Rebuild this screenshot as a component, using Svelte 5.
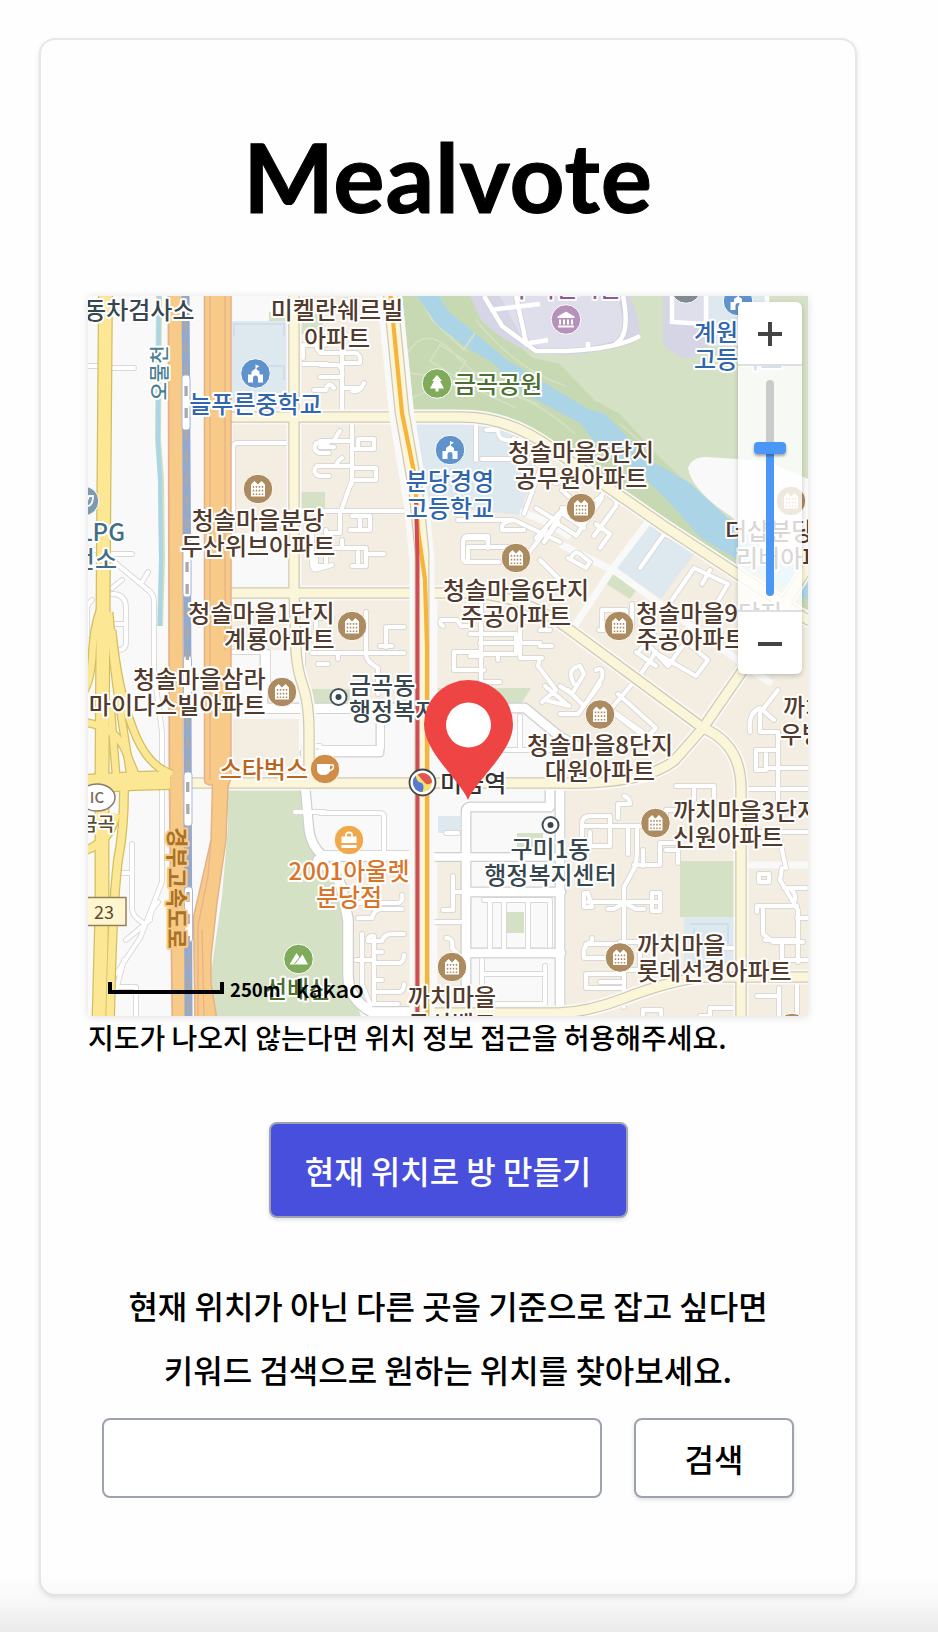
<script>
  let keyword = $state('');

  const brown = '#523a2c';
  const blue = '#2f66ad';
  const slate = '#37474f';

  // Narrow neighbourhood streets
  const lanes = [
    'M86 366h12M112 368h22', 'M303 358v-12M303 364h24M322 353q-8-4-4-10h12M330 300v8h16v-8M303 345h22v-12',
    'M320 353h36q5 2 4 10h-18M342 353v56M320 365h18q6 4 4 12h-22M334 388q-6-8-8 2h-12M352 391q8 2 12-8M342 388h18',
    'M352 424v60M320 441h32M334 441q4-8 6-10M320 447h14M352 449h6v-10h16v10h-20M320 466h32M336 466q2-6 6-8M352 480v-12h24v12h-22M352 480l-10 28',
    'M233 530V448q0-5 5-5h51M317 443q-6 6 2 10h10M328 443h-12M329 466h-12q-6 6 2 10h10',
    'M299 511h112M340 511v22h-14M352 516h18v14h-20M360 516v14M342 540v8h24v18h-14M366 554h18M342 548h-14M358 552v14M326 530v36h-10v-12',
    'M312 535v30q1 6 6 4l14-4', 'M476 424v36M486 430h12q0 12 14 10h18M482 459h50v-12l-16 2M514 438l10 12M540 470l-16 44M552 480q6 8 10-4l14-14',
    'M458 520h56l46 22M514 520q-14 2-12 10h22M536 508l22 14-14 20M564 508l-20 34M464 540q0-4 4-4h20v12',
    'M568 450l40 34q-4 12-12 16M562 490l28 26M576 536l26-38M596 524l14 10-10 14M610 496q8 4 6 10l-22 30M562 508l20 18M558 524l16 10',
    'M572 556q4-6 8-2l10 8-4 6-18-10M640 568l24-34 8 4M562 582l-22-22M536 538l24-26 24 16',
    'M465 538h18q5 0 5 5v4h22M465 538q-2 0-2 4v16q0 4 4 4h32M488 547h-20v14M546 530l-24 32',
    'M672 600l22-32 34 16-18 30M710 570l-8 14M640 650l14-16M602 630v-20h24v10M599 630h8M632 604v22M644 640l24 26 16-22M684 640l24 20-12 16-42-24M636 652l20 14M656 652l-18 26',
    'M441 620h16l4 6h10M441 620q-2 4 2 6M481 602v80M470 634h46v20h-36M480 643h60M454 652v18h30M456 652h24M470 656h12M498 654v6M520 628v30h22M540 630h10M480 682h20M540 646h12M540 658l-2 8 18 24-14 12M545 686l24 20-24-6',
    'M366 612v42q0 8 12 14M386 627h18M386 627v20M380 646h12M320 653h84M338 653v6M378 668v26',
    'M303 648v26M312 653h18M318 664h10M316 628v-10h16',
    'M88 548l22 6h22M112 560l36 30q6 4 6 12v70l8 60v56M148 572l-6 10M112 588l10-8M92 600q-5 4-5 10v26M112 594q14 0 14 14v34q0 8-8 8t-5-12M112 624h14',
    'M162 790v92l-22 56-24 36M132 844v64q0 8 10 14M132 873h-10M158 902q-8 8-8 18l-24 20M118 987h18v40M124 960l-8 30',
    'M268 652v40M233 652h34M248 711h170M320 748h62V710M304 746h16',
    'M320 813h60q4 0 4 4v34M295 812h30M320 853h95M427 857h36',
    'M458 833h-12M520 716v34h-40M512 750h50',
    'M427 922h36M453 876v34h-10M453 892h8M446 938q8 0 6 10l8 8M490 900v48M504 900v48M528 900v48M482 960v38q0 6 5 6h58v-38M482 974h60M484 900h66v46',
    'M352 903h46q6-2 4-8M358 918h14q2-9 10-9h20M398 909h-24M372 936q-4 0-4 5h14q2-7 10-7h12M374 936v68M374 963h26q4-2 4-8M374 992h26q4-2 4-8M356 960h18M362 934v50l8 20h28M374 952h8M374 980h8',
    'M618 818v-14h12q0-6-6-8M582 824q0-8 8-8h20v30h-28zM590 846v-14M628 826v28M582 826h60M637 826v25l-1 14-12 22v120M643 850v16M634 865h26v-22h18v20M666 850h12M588 902h72M660 893v18h-8v-18zM588 893h-4v14h8zM624 903l12 6h8M624 903l-10 6h-6',
    'M586 944h34v14h-36q-2-14 8-16v-4M586 974h38v14h-38zM600 982h24M620 942h20v28h-16',
    'M676 786h38v20M694 786v14M666 824v-14h12M748 789h60M778 770v36M748 832h60M778 832l8 36M782 868l-2 12 18 30v52M759 878v-4h10v8h-10zM784 888h22M790 888q8 8 4 14M757 912v-6h40M763 906v28l10 8h30M797 918h14M765 940h32M782 940v20h30M757 996h22v-8M797 980v36M779 988v36M643 1016v-6h18v10M722 948h14M700 1016h10v-8h24',
    'M750 732q-2-20 10-24l14 12M760 708v24h18M778 750h-22v20h10v-16M766 768h44M778 732v36M778 690l-14 18',
    'M560 714h18l22-30M568 690l14 14M574 684q-8-16 6-18l4 8-12 20-12-8M596 670q8-4 6 8l-14 22M632 684l-22 26 36 28M618 694l38 34-8 8-34-24'
  ];

  // Wider white streets
  const streets = [
    { d: 'M305 786l4 44q2 16 14 26h22', w: 11 },
    { d: 'M318 860q22 16 24 30l6 30v55q0 24 24 37h42', w: 12 },
    { d: 'M265 708h260l34 28 18 10', w: 11 },
    { d: 'M380 708v45h-76', w: 9 },
    { d: 'M466 1012V812q0-5 5-5h79v-20', w: 11 },
    { d: 'M320 857h240', w: 10 },
    { d: 'M560 787v230M471 892h90M471 953h90', w: 11 },
    { d: 'M264 652v52', w: 9 }
  ];

  const mains = [
    'M231 417h225q50-2 95 31l113 78 144 94',
    'M231 593h225q62-2 110 34l137 101q38 16 38 60v230',
    'M188 783h374q80 2 112-22l29-33 40-58 68-108',
    'M294 290v300l2 60q1 20 7 36 6 18 6 45v52',
    'M418 1013h140q30-1 64-14 52-20 84-22h104'
  ];

  const railGaps = [
    [186, 375, 430], [187, 548, 597], [187.5, 656, 717], [188, 772, 826], [188.5, 887, 942]
  ];

  const labels = [
    ['동차검사소', 194.5, 310, 'end', slate],
    ['미켈란쉐르빌', 337, 310, 'middle', brown],
    ['아파트', 337, 337.5, 'middle', brown],
    ['구미전시관', 566, 288, 'middle', '#8b5a9b'],
    ['늘푸른중학교', 255.5, 404, 'middle', blue],
    ['금곡공원', 454, 384, 'start', '#4b702f'],
    ['분당경영', 450, 481, 'middle', blue],
    ['고등학교', 450, 507.5, 'middle', blue],
    ['계원예술', 694, 332, 'start', blue],
    ['고등학교', 694, 358.5, 'start', blue],
    ['청솔마을5단지', 581, 452, 'middle', brown],
    ['공무원아파트', 581, 478, 'middle', brown],
    ['청솔마을분당', 258, 519.5, 'middle', brown],
    ['두산위브아파트', 258, 546, 'middle', brown],
    ['더샵분당', 725, 530.5, 'start', brown],
    ['리버아파트', 736, 557.5, 'start', brown],
    ['LPG', 125, 532, 'end', '#3f6f88'],
    ['충전소', 117, 559, 'end', '#3f6f88'],
    ['청솔마을6단지', 516, 589.5, 'middle', brown],
    ['주공아파트', 516, 615.5, 'middle', brown],
    ['청솔마을1단지', 334.5, 612.5, 'end', brown],
    ['계룡아파트', 334.5, 639, 'end', brown],
    ['청솔마을9단지', 636, 613, 'start', brown],
    ['주공아파트', 636, 639, 'start', brown],
    ['청솔마을삼라', 265.5, 678.5, 'end', brown],
    ['마이다스빌아파트', 265.5, 705, 'end', brown],
    ['금곡동', 349, 684.5, 'start', slate],
    ['행정복지센터', 349, 711, 'start', slate],
    ['까치마을', 783, 707, 'start', brown],
    ['우방아파트', 780, 734, 'start', brown],
    ['청솔마을8단지', 600, 745, 'middle', brown],
    ['대원아파트', 600, 771, 'middle', brown],
    ['스타벅스', 308, 769, 'end', '#b9651c'],
    ['미금역', 440, 783, 'start', '#333333'],
    ['까치마을3단지', 673, 811, 'start', brown],
    ['신원아파트', 673, 837, 'start', brown],
    ['구미1동', 550.5, 849, 'middle', slate],
    ['행정복지센터', 550.5, 875, 'middle', slate],
    ['2001아울렛', 349, 871, 'middle', '#d9752a'],
    ['분당점', 349, 897, 'middle', '#d9752a'],
    ['까치마을', 637, 945, 'start', brown],
    ['롯데선경아파트', 637, 971, 'start', brown],
    ['까치마을', 452, 997, 'middle', brown],
    ['두산벨트', 452, 1024, 'middle', brown],
    ['선배산', 298, 989, 'middle', '#4b702f']
  ];

  const apartments = [
    [258, 489], [581, 508], [516, 558], [352, 626], [619, 626], [282, 692],
    [600, 714.5], [655.5, 823], [620, 957.5], [452, 967], [791, 501], [792, 1028]
  ];
  const schools = [[255.500, 373.500], [450, 450], [738, 301]];
  const offices = [[338.500, 697], [550.500, 825]];
</script>

<main class="card">
  <h1>Mealvote</h1>

  <section class="map">
    <svg class="tiles" viewBox="88 296 720 720" width="720" height="720">
      <rect x="88" y="296" width="720" height="720" fill="#f9f9f9" />

      <!-- land blocks -->
      <path fill="#f3ede2" d="M299 296h86l31 245v165H300V600h-67V424h56v-8h10zM231 608h57v44h-57zM233 719h66v58h-66zM431 600V420h377v596H566V778l-6-44-40-30h-90z" />
      <path fill="#f9f9f9" d="M270 650h28l8 54h-40zM430 716h90l40 24v40H430zM320 716h95v60H318zM231 533h57v54h-57zM310 794h106v60h-86z" />
      <path fill="#f3ede2" d="M343 862h71v150h-34q-25-10-28-40v-55zM431 862h30v150h-30z" />
      <path fill="#dde8ef" d="M231 321h57v90h-57zM416 423h70q34 6 56 22l-22 70-92-10zM647 516l48 37-34 46-45-32zM684 917h50v61h-50zM438 816h22v17h-22z" />
      <path fill="none" stroke="#cfdeea" stroke-width="2" d="M234 336v-12h50v12M262 366h22v14M690 924h38v20M694 950v-22" />
      <path fill="#d5e1c5" d="M228 787h76l5 46 14 24 14 22 10 30v68l14 39H208l4-50 10-70 6-70z" />
      <path fill="#d5e1c5" d="M402 296h406v300l-80-36-70-46-100-70q-35-28-80-33h-64z" />
      <path fill="#c7d9b3" d="M402 296h16l13 24 32 30 30 10 27 27 50 31 43 22 40 27 37 36 30 34 88 53v20l-80-36-70-54-100-69q-35-28-80-40h-64z" />
      <path fill="#c7d9b3" d="M440 296h32l18 20 17 20 26 22 27 6 34 36 26 14 40 44 20 18-28 0-40-24-60-40-46-30-52-42z" />
      <path fill="#d5e1c5" d="M310 689h40v14h-40zM430 688h101l-10 16h-91zM612 570l26 18-8 11-25-16zM680 861h54v56h-54zM505 912h19v21h-19zM517 833h26v14h-26zM301 492h24v16h-24zM269 312h20v9h-20zM299 312h24v22h-24z" />
      <path fill="none" stroke="#d5e1c5" stroke-width="1.500" d="M408 352q20-30 50 6 30 30 80 46M405 372l60 10q60 6 110 52M440 345l26 16-10 16-26-16zM406 400l50-20 60 28M476 320q40 50 90 66M620 424l30 26" />
      <path fill="#acd4e7" d="M417 296h22l10 16 26 21 32 27 46 28 37 22 14 3 14 14 32 33 40 23 38 35 80 44v38l-64-36-44-27-30-34-37-36-40-27-13-17-10-5-52-28-26-28-25-14-30-23z" />
      <path fill="none" stroke="#d5e1c5" stroke-width="2" d="M475 333l-12 18" />
      <path fill="#d6d5e6" d="M470 296h160l8 22 3 22-48 12q-34 6-60 0-28-8-52-32zM663 296h50v46q-10 16-28 16-12-2-22-15z" />
      <path fill="#dfdeeb" d="M500 296h118l8 42-66 16-36-12zM674 296h32v28h-32z" />
      <path fill="#dde8ef" d="M708 296h60v50h-60z" />
      <path fill="#f9f9f9" d="M688 468q4-11 18-11l60 4 42 18v90l-44-20-32-32q-40-26-44-49z" />
      <path fill="none" stroke="#cfcfdb" stroke-width="6" d="M484 296l18 30 34 25h30q50-2 74-15M623 296q8 40-8 48M516 296l10 46" />
      <path fill="none" stroke="#fff" stroke-width="4.500" d="M484 296l18 30 34 25h30q50-2 74-15M623 296q8 40-8 48M516 296l10 46M490 310l50-6M524 344l24-4M588 350v-8M672 296v26l34 2v-28M767 296v12" />

      <path fill="none" stroke="#f9f9f9" stroke-width="7" d="M648 522l-35 46-40 60M560 544l56 28 116 84 40 28M380 296l14 115M394 424l20 120v160M434 600v420M414 862v150M748 865h60M520 512q30 8 50 26" />

      <!-- streets -->
      <g fill="none" stroke-linejoin="round" stroke-linecap="round">
        {#each lanes as d}<path {d} stroke="#d9d8d6" stroke-width="5.800" />{/each}
        {#each streets as s}<path d={s.d} stroke="#cfcfcf" stroke-width={s.w} />{/each}
        {#each lanes as d}<path {d} stroke="#fff" stroke-width="4" />{/each}
        {#each streets as s}<path d={s.d} stroke="#fff" stroke-width={s.w - 2.5} />{/each}
        {#each mains as d}<path {d} stroke="#f9f9f9" stroke-width="15" />{/each}
        {#each mains as d}<path {d} stroke="#cfcab2" stroke-width="11.500" />{/each}
        {#each mains as d}<path {d} stroke="#fbf6d9" stroke-width="9" />{/each}
      </g>

      <!-- central avenue with bus and subway lines -->
      <g fill="none">
        <path d="M389 290l12 120 15 90 6 60v460" stroke="#f9f9f9" stroke-width="25" />
        <path d="M390 290l12 122 14 80 6 60v466" stroke="#cfcab2" stroke-width="15" />
        <path d="M390 290l12 122 14 80 6 60v466" stroke="#fbf6d9" stroke-width="12.500" />
        <path d="M390 290l12 123 13 64 3 53 7 50 2 67v371" stroke="#f6b43c" stroke-width="4.200" />
        <path d="M416 500l1.500 60v456" stroke="#cf4b55" stroke-width="4" />
      </g>

      <!-- stream -->
      <path d="M159 290l-1 150 3 40 1 80-2 66" fill="none" stroke="#cfe0c2" stroke-width="6" />
      <path d="M159 290l-1 150 2 40 1 80-1 66" fill="none" stroke="#a9d5e6" stroke-width="4" />

      <!-- expressway and railway -->
      <path d="M175 290l1 490 3 246" fill="none" stroke="#e7b08a" stroke-width="15" />
      <path d="M175.500 290l1 490 3 246" fill="none" stroke="#f7cb87" stroke-width="12.500" />
      <path d="M185.500 290l1.500 250 1.500 480" fill="none" stroke="#95a9cd" stroke-width="8" />
      {#each railGaps as [x, top, bottom]}
        <rect x={x - 4} y={top} width="8" height={bottom - top} rx="3" fill="#fff" stroke="#a9b9d8" stroke-width="1" />
      {/each}
      <path d="M185.500 298l1.500 250 1.500 480" fill="none" stroke="#a9a9ac" stroke-width="3.300" stroke-dasharray="10 12" />

      <path d="M204.500 290V780q0 5 8 5L211 840 205 867 193.500 917 195 1020H217L211 983V957L217 903 226 840 228 787 231 778V290z" fill="#f7cb87" stroke="#e7b08a" stroke-width="1.500" />
      <path d="M210 290v490M225 290v360M211 840l-3 36-10 50v94M202 930l2 90" fill="none" stroke="#e7b18d" stroke-width="1.300" />

      <!-- yellow interchange -->
      <g fill="none">
        {#each [['#d2bf62', 0], ['#fbe794', 2.5]] as [stroke, inset]}
          <g {stroke}>
            <path d="M105.500 290l-2 250-1.500 240v130l-3 110" stroke-width={15 - inset} />
            <path d="M100 610q-7 20-8 50-2 24-10 34M109 612q4 50 10 90l12 76M112 630q6 60 20 96 14 40 40 48" stroke-width={9 - inset} />
            <path d="M82 722q34 4 44 30l10 24M110 700l6 74" stroke-width={9 - inset} />
            <path d="M86 850q24-8 30-36M124 790q0 40-6 70-6 50-8 160" stroke-width={10 - inset} />
            <path d="M84 784l50-3 36-1" stroke-width={20 - inset} />
          </g>
        {/each}
      </g>

      <!-- road signs -->
      <ellipse cx="97" cy="797.500" rx="18" ry="13.500" fill="#fff" stroke="#8c7b70" stroke-width="1.500" />
      <text x="97" y="803" class="sign" text-anchor="middle">IC</text>
      <rect x="80" y="897.500" width="46" height="28" fill="#fff6cf" stroke="#948059" stroke-width="1.500" />
      <text x="104" y="918.500" class="route" text-anchor="middle">23</text>

      <!-- place markers -->
      {#each apartments as [x, y]}
        <g transform="translate({x} {y})">
          <circle r="14.800" fill="#ab8b5f" stroke="#fff" />
          <path d="M-7 7.500V-4.500l3.500-3.500 3.500 3.500 3.500-3.500 3.500 3.500V7.500z" fill="#fff" />
          <path d="M-4.500-3v9M-1.500-3v9M1.500-3v9M4.500-3v9" stroke="#ab8b5f" stroke-width="1.500" stroke-dasharray="1.700 2" />
        </g>
      {/each}
      {#each schools as [x, y]}
        <g transform="translate({x} {y})">
          <circle r="14.800" fill="#6093cc" stroke="#fff" />
          <path d="M-7.500 9V1h3.500v-3L0-5l4 3v3h3.500v8H2.500V4.500a2.500 2.500 0 0 0-5 0V9zM0-9l4 1.700L1-5.500V-3H0z" fill="#fff" />
        </g>
      {/each}
      {#each offices as [x, y]}
        <circle cx={x} cy={y} r="8" fill="#fff" stroke="#45525a" stroke-width="2" />
        <circle cx={x} cy={y} r="3" fill="#37474f" />
      {/each}
      <g transform="translate(437 383.500)">
        <circle r="14.800" fill="#80ab5b" stroke="#fff" />
        <path d="M0-8.500l5 6H3l4 7.500H1.500V8h-3V5H-7l4-7.500h-2z" fill="#fff" />
      </g>
      <g transform="translate(298.500 959)">
        <circle r="14.800" fill="#80ab5b" stroke="#fff" />
        <path d="M-9 5.500L-2-6 1.500-1 4-4.500 9.500 5.500zM-3-1l2 2" fill="#fff" />
        <path d="M-4 5L1.500-2" stroke="#80ab5b" stroke-width="1" />
      </g>
      <g transform="translate(566 319.500)">
        <circle r="14.800" fill="#b691ba" stroke="#fff" />
        <path d="M-8.500-3L0-8l8.500 5v1.500h-17zM-7 0h2v5h-2zM-3 0h2v5h-2zM1 0h2v5H1zM5 0h2v5H5zM-8 6H8v2H-8z" fill="#fff" />
      </g>
      <g transform="translate(686 288.500)">
        <circle r="14.800" fill="#7f8a91" stroke="#fff" />
        <path d="M-7 1V6H7V1" fill="none" stroke="#fff" stroke-width="2" />
      </g>
      <g transform="translate(325 769)">
        <circle r="14.800" fill="#cf8d47" stroke="#fff" />
        <path d="M-8-5H5v5q0 6-6.500 6T-8 0z" fill="#fff" />
        <path d="M5-4h3q2 4-4 6" fill="none" stroke="#fff" stroke-width="1.500" />
      </g>
      <g transform="translate(349 840)">
        <circle r="14.800" fill="#f0a84c" stroke="#fff" />
        <path d="M-7.500-3.500h15V3h-15zM-7.500 5h15v3h-15z" fill="#fff" />
        <path d="M-3-3v-2.500q0-2 3-2t3 2V-3" fill="none" stroke="#fff" stroke-width="1.800" />
      </g>
      <g transform="translate(84 501)">
        <circle r="14.800" fill="#7c9bb0" stroke="#fff" />
        <path d="M4 5q5-1 5-10H5L3 0" fill="none" stroke="#fff" stroke-width="1.800" />
      </g>
      <g transform="translate(422.500 782.500)">
        <circle r="13" fill="#fff" stroke="#45484c" stroke-width="1.800" />
        <circle r="9.500" fill="#f5e070" />
        <path d="M-5-8A9.500 9.500 0 0 1 9.500 0Q5 4 1-1T-5-8z" fill="#df5753" />
        <path d="M-6.500-7A9.500 9.500 0 0 0 0 9.500Q2 4 0 1-7-1-6.500-7z" fill="#5878d3" />
      </g>

      {#each labels as [text, x, y, anchor, color]}
        <text class="place" {x} y={y + 9} text-anchor={anchor} fill={color}>{text}</text>
      {/each}
      <text class="place stream" transform="translate(167 373) rotate(-90)" text-anchor="middle">오물천</text>
      <text class="place highway" transform="translate(169 888) rotate(90)" text-anchor="middle">경부고속도로</text>
      <text class="place exit" x="115" y="831" text-anchor="end">금곡</text>

      <!-- map scale -->
      <path d="M110 982v10h112v-10" fill="none" stroke="#000" stroke-width="4" />
      <text class="scale" x="230" y="997">250m</text>
      <text class="brand" x="295.500" y="998">kakao</text>

      <!-- selected location -->
      <path d="M468 800C460 780 424 752 424 724.500a44.500 44.500 0 0 1 89 0C513 752 476 780 468 800z" fill="#ef4444" />
      <circle cx="468.500" cy="725" r="22.500" fill="#fff" />
    </svg>

    <div class="zoom">
      <button class="step" aria-label="확대">
        <svg viewBox="0 0 24 24" width="24" height="24"><path d="M12 0v24M0 12h24" stroke="#444" stroke-width="4" /></svg>
      </button>
      <div class="slider"><div class="track"><i class="handle"></i></div></div>
      <button class="step minus" aria-label="축소">
        <svg viewBox="0 0 24 24" width="24" height="24"><path d="M0 12h24" stroke="#444" stroke-width="4" /></svg>
      </button>
    </div>
  </section>

  <p class="notice">지도가 나오지 않는다면 위치 정보 접근을 허용해주세요.</p>

  <button class="create">현재 위치로 방 만들기</button>

  <p class="guide">현재 위치가 아닌 다른 곳을 기준으로 잡고 싶다면<br />키워드 검색으로 원하는 위치를 찾아보세요.</p>

  <form class="search" onsubmit={(e) => e.preventDefault()}>
    <input type="text" bind:value={keyword} />
    <button type="submit">검색</button>
  </form>
</main>
<div class="fade"></div>

<style>
  :global(body) {
    background: #fefefe;
    overflow: hidden;
  }
  :global(#app) {
    height: 1632px;
    overflow: hidden;
    color: #000;
    font-family: 'Noto Sans CJK KR', sans-serif;
  }
  .card,
  .card * {
    box-sizing: border-box;
  }
  .card {
    display: flex;
    flex-direction: column;
    align-items: center;
    width: 818px;
    height: 1558px;
    margin: 38px 0 0 39px;
    padding: 88px 47px 0;
    border: 2px solid #e5e7eb;
    border-radius: 16px;
    background: #fefefe;
    box-shadow: 0 2px 5px rgba(0, 0, 0, 0.1);
  }
  h1 {
    margin: 0 0 72px;
    font: 700 96px/96px Lato, sans-serif;
    letter-spacing: 0.8px;
    -webkit-text-stroke: 1px #000;
  }
  .map {
    position: relative;
    flex: none;
    width: 720px;
    height: 720px;
    box-shadow: 0 1px 8px rgba(0, 0, 0, 0.12);
  }
  .tiles {
    display: block;
    overflow: hidden;
  }
  .place {
    font-size: 24px;
    font-weight: 500;
    stroke: #fff;
    stroke-width: 4px;
    stroke-linejoin: round;
    paint-order: stroke;
  }
  .stream {
    font-size: 20px;
    fill: #4a8094;
  }
  .highway {
    font-size: 22px;
    font-weight: 700;
    fill: #a87328;
    stroke: #f7cb87;
  }
  .exit {
    font-size: 19px;
    fill: #5b4a30;
  }
  .sign {
    font-size: 15px;
    font-weight: 500;
    fill: #7b6659;
  }
  .route {
    font-size: 18px;
    fill: #5b4a30;
  }
  .scale {
    font-size: 18.5px;
    font-weight: 700;
  }
  .brand {
    font-size: 24px;
    font-weight: 500;
    letter-spacing: -0.3px;
  }
  .zoom {
    position: absolute;
    top: 6px;
    right: 6px;
    display: flex;
    flex-direction: column;
    width: 64px;
    height: 372px;
    border-radius: 6px;
    overflow: hidden;
    box-shadow: 0 2px 5px rgba(0, 0, 0, 0.2);
  }
  .step {
    display: flex;
    flex: 0 0 64px;
    align-items: center;
    justify-content: center;
    padding: 2px 0 0;
    border: 0;
    border-bottom: 2px solid #dfdfdf;
    background: #fff;
  }
  .minus {
    border-top: 2px solid #dfdfdf;
    border-bottom: 0;
  }
  .slider {
    display: flex;
    flex: 1;
    justify-content: center;
    padding: 14px 0;
    background: rgba(255, 255, 255, 0.8);
  }
  .track {
    display: flex;
    justify-content: center;
    width: 8px;
    padding-top: 62px;
    border-radius: 4px;
    background: linear-gradient(#cbcbcb 68px, #4b97f8 68px);
  }
  .handle {
    flex: 0 0 32px;
    height: 12px;
    border-radius: 4px;
    background: #4b97f8;
    box-shadow: 0 2px 3px rgba(0, 0, 0, 0.35);
  }
  .notice {
    align-self: flex-start;
    margin: -2px 0 2px;
    font-size: 28px;
    font-weight: 500;
    line-height: 46px;
  }
  button {
    font-family: inherit;
    font-size: 32px;
    font-weight: 500;
  }
  .create {
    width: 359px;
    height: 96px;
    flex: none;
    margin-top: 60px;
    padding: 0;
    border: 2px solid #9ca3af;
    border-radius: 8px;
    background: #484fdc;
    color: #fff;
    box-shadow: 0 2px 4px rgba(0, 0, 0, 0.12);
  }
  .guide {
    margin: 55px 0 3px;
    font-size: 32px;
    font-weight: 500;
    line-height: 64px;
    text-align: center;
  }
  .search {
    display: flex;
    gap: 32px;
    width: 692px;
    margin-top: 14px;
  }
  .search input,
  .search button {
    height: 80px;
    border: 2px solid #9ca3af;
    border-radius: 8px;
    background: #fff;
  }
  .search input {
    flex: 1;
    min-width: 0;
    padding: 0 16px;
    font-size: 32px;
  }
  .search button {
    flex: 0 0 160px;
    color: #000;
    box-shadow: 0 2px 4px rgba(0, 0, 0, 0.12);
  }
  .fade {
    position: fixed;
    right: 0;
    bottom: 0;
    left: 0;
    height: 60px;
    background: linear-gradient(rgba(0, 0, 0, 0), rgba(0, 0, 0, 0.02) 45%, rgba(0, 0, 0, 0.08));
    pointer-events: none;
  }
</style>
